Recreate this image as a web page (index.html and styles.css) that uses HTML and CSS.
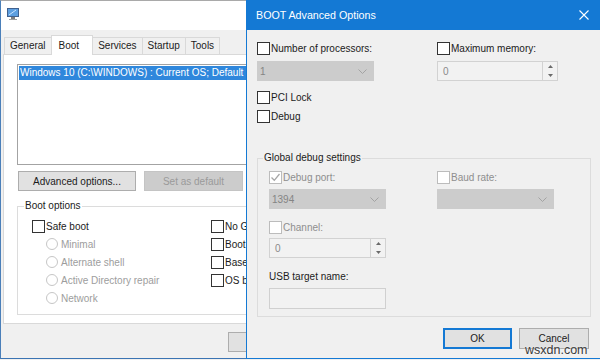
FILE: index.html
```html
<!DOCTYPE html>
<html>
<head>
    <meta charset="utf-8">
    <title>System Configuration - BOOT Advanced Options</title>
    <link rel="stylesheet" href="styles.css">
</head>
<body>
<div class="desktop">

    <!-- System Configuration window (behind) -->
    <div class="window msconfig">
        <div class="titlebar-light">
            <svg class="app-icon" width="14" height="14" viewBox="0 0 14 14">
                <rect x="1" y="1" width="12" height="9" fill="#40618f"/>
                <rect x="2" y="2" width="10" height="7" fill="#5d9fe0"/>
                <path d="M3 8 L10 3" stroke="#c9e3ff" stroke-width="1"/>
                <rect x="5" y="10" width="4" height="2" fill="#7d7d7d"/>
                <rect x="3" y="12" width="8" height="1" fill="#a0a0a0"/>
            </svg>
        </div>

        <ul class="tabs">
            <li>General</li>
            <li class="active">Boot</li>
            <li>Services</li>
            <li>Startup</li>
            <li>Tools</li>
        </ul>

        <div class="tab-page">
            <div class="os-list">
                <div class="os-item selected">Windows 10 (C:\WINDOWS) : Current OS; Default OS</div>
            </div>

            <div class="button-row">
                <button class="btn btn-advanced">Advanced options...</button>
                <button class="btn btn-set-default" disabled>Set as default</button>
            </div>

            <div class="group boot-options">
                <div class="group-title">Boot options</div>
                <div class="boot-grid">
                    <div class="col">
                        <div class="opt-row"><span class="box"></span>Safe boot</div>
                        <div class="opt-row indent disabled"><span class="radio"></span>Minimal</div>
                        <div class="opt-row indent disabled"><span class="radio"></span>Alternate shell</div>
                        <div class="opt-row indent disabled"><span class="radio"></span>Active Directory repair</div>
                        <div class="opt-row indent disabled"><span class="radio"></span>Network</div>
                    </div>
                    <div class="col">
                        <div class="opt-row"><span class="box"></span>No GUI boot</div>
                        <div class="opt-row"><span class="box"></span>Boot log</div>
                        <div class="opt-row"><span class="box"></span>Base video</div>
                        <div class="opt-row"><span class="box"></span>OS boot information</div>
                    </div>
                </div>
            </div>
        </div>

        <div class="main-footer">
            <button class="btn">OK</button>
            <button class="btn">Cancel</button>
            <button class="btn">Apply</button>
            <button class="btn">Help</button>
        </div>
    </div>

    <!-- BOOT Advanced Options dialog (front) -->
    <div class="window dialog">
        <div class="titlebar-accent">
            <span>BOOT Advanced Options</span>
            <svg class="close" width="10" height="10" viewBox="0 0 10 10">
                <path d="M0.5 0.5 L9.5 9.5 M9.5 0.5 L0.5 9.5" stroke="#fff" stroke-width="1.1"/>
            </svg>
        </div>

        <div class="dlg-body">
            <div class="pair top-pair">
                <div class="field">
                    <div class="check"><span class="box"></span>Number of processors:</div>
                    <div class="combo">
                        <span>1</span>
                        <svg width="9" height="5" viewBox="0 0 9 5"><path d="M0.5 0.5 L4.5 4.5 L8.5 0.5" fill="none" stroke="#a3a3a3"/></svg>
                    </div>
                </div>
                <div class="field">
                    <div class="check"><span class="box"></span>Maximum memory:</div>
                    <div class="spin spin-wide">
                        <span>0</span>
                        <div class="spin-btns">
                            <svg width="5" height="3" viewBox="0 0 5 3"><path d="M0 3 L2.5 0 L5 3 Z" fill="#6a6a6a"/></svg>
                            <svg width="5" height="3" viewBox="0 0 5 3"><path d="M0 0 L2.5 3 L5 0 Z" fill="#6a6a6a"/></svg>
                        </div>
                    </div>
                </div>
            </div>

            <div class="check pci-lock"><span class="box"></span>PCI Lock</div>
            <div class="check debug"><span class="box"></span>Debug</div>

            <div class="group debug-group">
                <div class="group-title">Global debug settings</div>
                <div class="pair group-pair">
                    <div class="field">
                        <div class="check disabled">
                            <span class="box checked">
                                <svg width="11" height="11" viewBox="0 0 11 11"><path d="M1.5 5.5 L4.3 8.3 L9.5 2" fill="none" stroke="#a6a6a6" stroke-width="1.3"/></svg>
                            </span>Debug port:
                        </div>
                        <div class="combo">
                            <span>1394</span>
                            <svg width="9" height="5" viewBox="0 0 9 5"><path d="M0.5 0.5 L4.5 4.5 L8.5 0.5" fill="none" stroke="#a3a3a3"/></svg>
                        </div>
                    </div>
                    <div class="field">
                        <div class="check disabled"><span class="box"></span>Baud rate:</div>
                        <div class="combo">
                            <span></span>
                            <svg width="9" height="5" viewBox="0 0 9 5"><path d="M0.5 0.5 L4.5 4.5 L8.5 0.5" fill="none" stroke="#a3a3a3"/></svg>
                        </div>
                    </div>
                </div>

                <div class="check disabled channel"><span class="box"></span>Channel:</div>
                <div class="spin">
                    <span>0</span>
                    <div class="spin-btns">
                        <svg width="5" height="3" viewBox="0 0 5 3"><path d="M0 3 L2.5 0 L5 3 Z" fill="#6a6a6a"/></svg>
                        <svg width="5" height="3" viewBox="0 0 5 3"><path d="M0 0 L2.5 3 L5 0 Z" fill="#6a6a6a"/></svg>
                    </div>
                </div>

                <div class="usb-label">USB target name:</div>
                <div class="textbox"></div>
            </div>

            <div class="dlg-buttons">
                <button class="btn btn-ok">OK</button>
                <button class="btn btn-cancel">Cancel</button>
            </div>
        </div>
    </div>

    <div class="watermark">wsxdn.com</div>
</div>
</body>
</html>
```

FILE: styles.css
```css
* {
    box-sizing: border-box;
}

html, body {
    margin: 0;
    padding: 0;
}

body {
    width: 600px;
    height: 360px;
    overflow: hidden;
    background: #f0f0f0;
    font: 10px "Liberation Sans", Arial, sans-serif;
    color: #1b1b1b;
}

.desktop {
    position: relative;
    width: 600px;
    height: 360px;
    overflow: hidden;
}

.window {
    position: absolute;
    top: 0;
    display: flex;
    flex-direction: column;
    background: #f0f0f0;
}

/* ---- System Configuration ---- */

.msconfig {
    left: 0;
    width: 560px;
    height: 359px;
    border: 1px solid #a9a9a9;
    border-left-color: #4a7fb9;
    border-bottom-color: #3b74b3;
}

.titlebar-light {
    flex: none;
    height: 29px;
    padding: 6px 0 0 5px;
    background: #fff;
}

.app-icon {
    display: block;
}

.tabs {
    flex: none;
    display: flex;
    align-items: flex-end;
    margin: 5px 0 0;
    padding: 0 0 0 3px;
    list-style: none;
}

.tabs li {
    height: 17px;
    line-height: 16px;
    padding: 0 5px;
    border: 1px solid #d9d9d9;
    border-bottom: none;
    background: #f0f0f0;
}

.tabs li + li {
    margin-left: -1px;
}

.tabs li.active {
    position: relative;
    z-index: 1;
    height: 20px;
    line-height: 19px;
    margin-bottom: -1px;
    padding: 0 13px 0 7px;
    background: #fff;
}

.tab-page {
    flex: none;
    height: 270px;
    margin-left: 2px;
    padding: 9px 13px 0;
    border: 1px solid #d9d9d9;
    background: #fff;
}

.os-list {
    height: 101px;
    padding: 1px;
    border: 1px solid #a3a3a3;
    background: #fff;
}

.os-item {
    height: 14px;
    line-height: 14px;
    padding-left: 1px;
    white-space: nowrap;
}

.os-item.selected {
    background: #2f87dc;
    color: #fff;
}

.button-row {
    display: flex;
    margin-top: 6px;
}

.btn {
    height: 20px;
    padding: 0;
    border: 1px solid #adadad;
    background: #e1e1e1;
    font: inherit;
    color: #1b1b1b;
}

.btn:disabled {
    border-color: #c4c4c4;
    background: #cccccc;
    color: #9a9a9a;
}

.btn-advanced {
    width: 118px;
    margin-left: 1px;
}

.btn-set-default {
    width: 99px;
    margin-left: 8px;
}

.group {
    border: 1px solid #dcdcdc;
}

.group-title {
    width: fit-content;
    line-height: 12px;
    padding: 0 1px;
}

.boot-options {
    height: 109px;
    margin-top: 15px;
    padding: 0 0 0 14px;
}

.boot-options .group-title {
    margin: -7px 0 0 -8px;
    background: #fff;
}

.boot-grid {
    display: grid;
    grid-template-columns: 179px 1fr;
    margin-top: 5px;
}

.opt-row {
    display: flex;
    align-items: center;
    height: 18px;
    white-space: nowrap;
}

.opt-row.indent {
    padding-left: 14px;
}

.opt-row.disabled {
    color: #9d9d9d;
}

.box {
    flex: none;
    display: flex;
    align-items: center;
    justify-content: center;
    width: 13px;
    height: 13px;
    margin-right: 1px;
    border: 1px solid #333;
    background: #fff;
}

.radio {
    flex: none;
    width: 12px;
    height: 12px;
    margin-right: 3px;
    border: 1px solid #c6c6c6;
    border-radius: 50%;
    background: #fff;
}

.main-footer {
    display: flex;
    gap: 6px;
    margin-top: 8px;
    padding-left: 227px;
}

.main-footer .btn {
    flex: none;
    width: 75px;
}

/* ---- BOOT Advanced Options ---- */

.dialog {
    left: 246px;
    width: 360px;
    height: 359px;
    border: 1px solid #1479d4;
    border-top: none;
}

.titlebar-accent {
    flex: none;
    display: flex;
    align-items: center;
    height: 30px;
    padding: 0 16px 0 9px;
    background: #1479d4;
    color: #fff;
    font-size: 10.7px;
}

.titlebar-accent .close {
    margin-left: auto;
}

.dlg-body {
    padding: 12px 0 0 10px;
}

.pair {
    display: grid;
}

.top-pair {
    grid-template-columns: 180px 1fr;
}

.group-pair {
    grid-template-columns: 168px 1fr;
    margin-top: 7px;
}

.check {
    display: flex;
    align-items: center;
    height: 13px;
    white-space: nowrap;
}

.check.disabled {
    color: #8e8e8e;
}

.check.disabled .box {
    border-color: #bcbcbc;
}

.combo {
    display: flex;
    align-items: center;
    justify-content: space-between;
    width: 117px;
    height: 20px;
    padding: 0 7px 0 3px;
    background: #cccccc;
    color: #848484;
}

.top-pair .combo {
    margin-top: 6px;
}

.group-pair .combo {
    margin-top: 5px;
}

.spin {
    display: flex;
    align-items: center;
    width: 117px;
    height: 20px;
    margin-top: 4px;
    padding-left: 5px;
    border: 1px solid #d2d2d2;
    background: #f2f2f2;
    color: #8a8a8a;
}

.spin-wide {
    width: 121px;
    margin-top: 6px;
}

.spin span {
    flex: 1;
}

.spin-btns {
    display: flex;
    flex-direction: column;
    align-items: center;
    justify-content: space-around;
    width: 15px;
    height: 100%;
    border-left: 1px solid #d2d2d2;
}

.spin-btns svg {
    display: block;
}

.pci-lock {
    margin-top: 10px;
}

.debug {
    margin-top: 6px;
}

.debug-group {
    width: 334px;
    height: 159px;
    margin-top: 35px;
    padding: 0 0 0 11px;
}

.debug-group .group-title {
    margin: -7px 0 0 -6px;
    background: #f0f0f0;
}

.channel {
    margin-top: 12px;
}

.usb-label {
    margin-top: 13px;
    line-height: 12px;
}

.textbox {
    width: 117px;
    height: 21px;
    margin-top: 5px;
    border: 1px solid #d0d0d0;
    background: #f2f2f2;
}

.dlg-buttons {
    display: flex;
    gap: 7px;
    margin: 11px 0 0 186px;
}

.btn-ok {
    width: 69px;
    height: 21px;
    border: 2px solid #1479d4;
}

.btn-cancel {
    width: 70px;
    height: 21px;
}

.watermark {
    position: absolute;
    left: 525px;
    top: 343px;
    font-size: 12.5px;
    color: #3a3a3a;
    text-shadow: 0 0 2px #fff;
}
```
